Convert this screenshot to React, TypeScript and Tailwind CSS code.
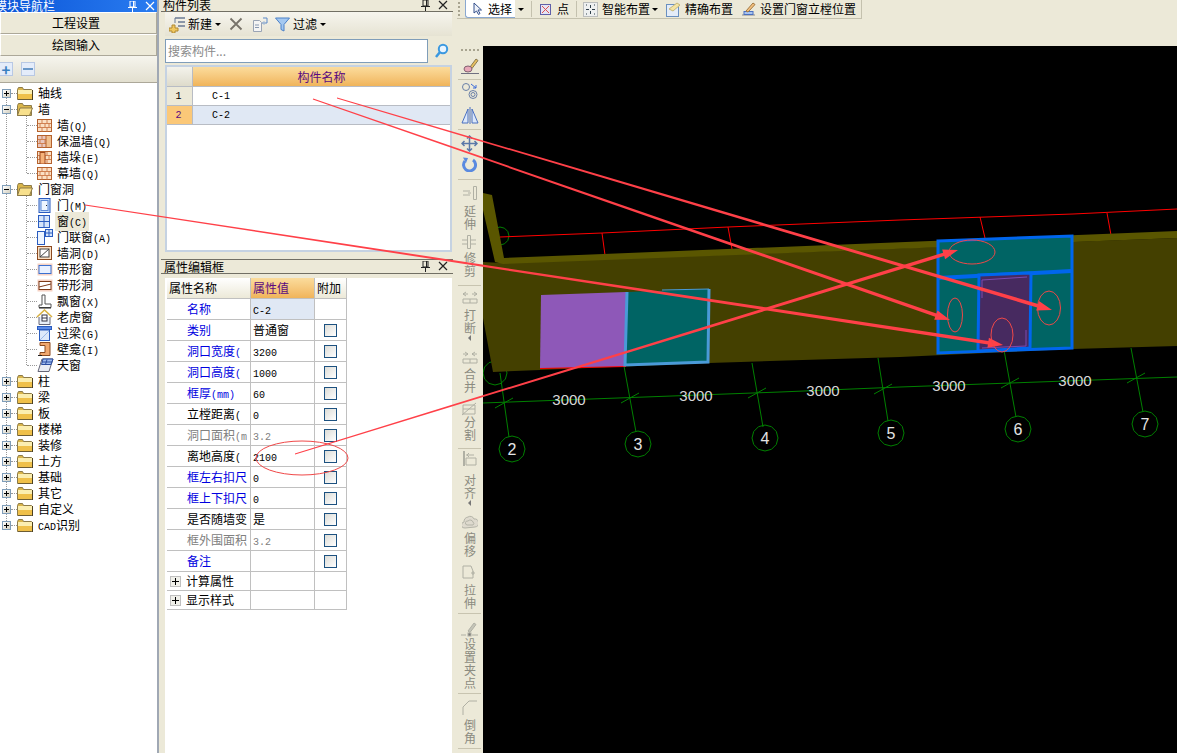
import React from "react";

const mono = "[font-family:'Liberation_Mono',monospace] text-[10px]";

// latin runs are drawn narrower, like the half width glyphs of the old ui font
function Txt({ children }: { children: string }) {
  const parts = children.split(/([\x00-\x7f]+)/).filter(Boolean);
  return (
    <>
      {parts.map((p, i) =>
        /^[\x00-\x7f]+$/.test(p) ? (
          <span key={i} className={mono}>
            {p}
          </span>
        ) : (
          <span key={i}>{p}</span>
        )
      )}
    </>
  );
}

function Pin({ light }: { light?: boolean }) {
  const c = light ? "#fff" : "#222";
  return (
    <svg width="9" height="11" viewBox="0 0 9 11">
      <path d="M2 0h5v6H2zM0 6.500h9M4.500 7v4M5.500 0v6" stroke={c} fill="none" />
    </svg>
  );
}

function Close({ light }: { light?: boolean }) {
  return (
    <svg width="10" height="10" viewBox="0 0 10 10">
      <path d="M1 1l8 8M9 1l-8 8" stroke={light ? "#fff" : "#222"} strokeWidth="1.2" />
    </svg>
  );
}

function Folder({ open }: { open?: boolean }) {
  return (
    <svg width="16" height="13" viewBox="0 0 16 13" className="shrink-0">
      <path d="M.5 2.500l1-2h4l1 2h8v10H.5z" fill="#d9b54a" stroke="#8d7b49" />
      {open ? (
        <path d="M3 5h12.500l-3 7.500H.5z" fill="#f8e08c" stroke="#8d7b49" />
      ) : (
        <>
          <path d="M1 3h14v4H1z" fill="#fbeeb0" />
          <path d="M1 7h14v5H1z" fill="#efc04a" />
          <path d="M15.500 3v10H1" stroke="#4c4020" fill="none" />
        </>
      )}
    </svg>
  );
}

function Brick({ kind }: { kind?: string }) {
  return (
    <svg width="15" height="13" viewBox="0 0 15 13" className="shrink-0">
      <rect x=".5" y=".5" width="14" height="12" fill={kind === "mesh" ? "#e8c8c0" : "#fbe0c4"} stroke="#b5622e" />
      <path d="M1 4.500h13M1 8.500h13M5 1v3.500M10 1v3.500M3 4.500v4M8 4.500v4M12 4.500v4M5 8.500v4M10 8.500v4" stroke="#d08050" fill="none" />
      {kind === "mesh" && <rect x="9" y=".5" width="5.500" height="12" fill="#f0c090" stroke="#b5622e" />}
      {kind === "pier" && <rect x="3" y="1.500" width="5" height="11.500" fill="#f5b27a" stroke="#a04a20" />}
    </svg>
  );
}

function LeafIcon({ name }: { name: string }) {
  switch (name) {
    case "door":
      return (
        <svg width="15" height="15" viewBox="0 0 15 15" className="shrink-0">
          <rect x="2" y=".5" width="11" height="14" fill="#c5dbf7" stroke="#2a5cc0" />
          <rect x="4" y="2.500" width="7" height="10" fill="#eef5ff" stroke="#5a88d8" />
          <rect x="9" y="7" width="1" height="1" fill="#222" />
        </svg>
      );
    case "window":
      return (
        <svg width="15" height="13" viewBox="0 0 15 13" className="shrink-0">
          <rect x="1.500" y=".5" width="11" height="12" fill="#d4e4fa" stroke="#2a5cc0" />
          <path d="M7 1v11M2 6.500h10" stroke="#2a5cc0" />
        </svg>
      );
    case "combo":
      return (
        <svg width="17" height="16" viewBox="0 0 17 16" className="-ml-[1px] shrink-0">
          <rect x="1.500" y="2.500" width="7" height="13" fill="#eef5ff" stroke="#2a5cc0" />
          <rect x="9.500" y=".5" width="7" height="7" fill="#d4e4fa" stroke="#2a5cc0" />
          <path d="M13 1v6M10 4h6" stroke="#2a5cc0" />
        </svg>
      );
    case "hole":
      return (
        <svg width="15" height="14" viewBox="0 0 15 14" className="shrink-0">
          <rect x=".5" y=".5" width="14" height="13" fill="#fbe0c4" stroke="#8c4a20" />
          <rect x="3" y="3" width="9" height="8" fill="#fff" stroke="#444" />
          <path d="M3 11l9-8" stroke="#444" />
        </svg>
      );
    case "strip":
      return (
        <svg width="16" height="13" viewBox="0 0 16 13" className="shrink-0">
          <rect x=".5" y=".5" width="15" height="12" fill="#f6d2c4" />
          <rect x="2" y="2.500" width="12" height="8" fill="#e8f0ff" stroke="#3a70d0" />
        </svg>
      );
    case "striphole":
      return (
        <svg width="16" height="13" viewBox="0 0 16 13" className="shrink-0">
          <rect x=".5" y=".5" width="15" height="12" fill="#f6d2c4" />
          <rect x="2" y="2.500" width="12" height="8" fill="#fff" stroke="#7c3a18" />
          <path d="M2 8l12-3" stroke="#7c3a18" />
        </svg>
      );
    case "bay":
      return (
        <svg width="15" height="15" viewBox="0 0 15 15" className="shrink-0">
          <path d="M5 1h3v9h6v3.500H2V11h3z" fill="#fff" stroke="#555" />
          <path d="M2 14h12" stroke="#222" />
        </svg>
      );
    case "dormer":
      return (
        <svg width="17" height="16" viewBox="0 0 17 16" className="-ml-[1px] shrink-0">
          <path d="M1 8l7.500-7L16 8" fill="none" stroke="#d8b040" strokeWidth="1.500" />
          <path d="M3 8v7.500h11V8" fill="#e8eef8" stroke="#667" />
          <rect x="6" y="6" width="5" height="6" fill="#fff" stroke="#334" />
          <path d="M6 9h5" stroke="#334" />
        </svg>
      );
    case "lintel":
      return (
        <svg width="15" height="15" viewBox="0 0 15 15" className="shrink-0">
          <rect x=".5" y=".5" width="14" height="3" fill="#5a8ae8" stroke="#2a5cc0" />
          <rect x="2.500" y="4" width="10" height="10.500" fill="#dce8fa" stroke="#2a5cc0" />
          <path d="M3 14l9-9" stroke="#9ab8e8" />
        </svg>
      );
    case "niche":
      return (
        <svg width="15" height="14" viewBox="0 0 15 14" className="shrink-0">
          <path d="M3 .5h10v13H3v-3h5v-7H3z" fill="#f0a870" stroke="#8c4a20" />
          <path d="M1 13.500h4" stroke="#222" />
        </svg>
      );
    default:
      return (
        <svg width="17" height="14" viewBox="0 0 17 14" className="shrink-0">
          <path d="M5 1h11l-4 12.500H1z" fill="#e8ecf4" stroke="#667" />
          <path d="M4.500 6.500L6 1h10l-2 5.500zM10 1.500L8.500 6.500M5 4h10" fill="#9fbcf0" stroke="#2a4ca0" />
        </svg>
      );
  }
}

function Expander({ open }: { open?: boolean }) {
  return (
    <span className="relative flex h-[9px] w-[9px] shrink-0 items-center justify-center border border-[#7f9db9] bg-gradient-to-br from-white to-[#d4d0c0]">
      <span className="absolute h-px w-[5px] bg-black" />
      {!open && <span className="absolute h-[5px] w-px bg-black" />}
    </span>
  );
}

type Node = { label: string; open?: boolean; leaf?: string; mesh?: string };

const tree: Node[] = [
  { label: "轴线" },
  { label: "墙", open: true },
  { label: "墙(Q)", leaf: "brick" },
  { label: "保温墙(Q)", leaf: "brick", mesh: "mesh" },
  { label: "墙垛(E)", leaf: "brick", mesh: "pier" },
  { label: "幕墙(Q)", leaf: "brick" },
  { label: "门窗洞", open: true },
  { label: "门(M)", leaf: "door" },
  { label: "窗(C)", leaf: "window" },
  { label: "门联窗(A)", leaf: "combo" },
  { label: "墙洞(D)", leaf: "hole" },
  { label: "带形窗", leaf: "strip" },
  { label: "带形洞", leaf: "striphole" },
  { label: "飘窗(X)", leaf: "bay" },
  { label: "老虎窗", leaf: "dormer" },
  { label: "过梁(G)", leaf: "lintel" },
  { label: "壁龛(I)", leaf: "niche" },
  { label: "天窗", leaf: "sky" },
  { label: "柱" },
  { label: "梁" },
  { label: "板" },
  { label: "楼梯" },
  { label: "装修" },
  { label: "土方" },
  { label: "基础" },
  { label: "其它" },
  { label: "自定义" },
  { label: "CAD识别" },
];

function TreeRow({ node }: { node: Node }) {
  if (node.leaf) {
    return (
      <div className="flex h-4 items-center">
        <span className="ml-[27px] w-[10px] shrink-0 border-t border-dotted border-[#999]" />
        <span className="flex w-[20px] shrink-0 justify-start">
          {node.leaf === "brick" ? <Brick kind={node.mesh} /> : <LeafIcon name={node.leaf} />}
        </span>
        <span className={node.label === "窗(C)" ? "-ml-[2px] bg-[#ece9d8] px-[2px]" : ""}>
          <Txt>{node.label}</Txt>
        </span>
      </div>
    );
  }
  return (
    <div className="flex h-4 items-center">
      <span className="ml-[2px]">
        <Expander open={node.open} />
      </span>
      <span className="w-[6px] shrink-0 border-t border-dotted border-[#999]" />
      <Folder open={node.open} />
      <span className="ml-[5px]">
        <Txt>{node.label}</Txt>
      </span>
    </div>
  );
}

function NavButton({ label }: { label: string }) {
  return (
    <div className="flex h-[22px] items-center justify-center border border-[#aca899] border-t-white border-l-white bg-[#ece9d8] pr-[5px] text-[12px]">
      {label}
    </div>
  );
}

function LeftPanel() {
  return (
    <div className="flex h-full w-[159px] shrink-0 flex-col border-r-2 border-[#a0a8b4]">
      <div className="flex h-[12px] items-end overflow-hidden bg-gradient-to-r from-[#0a55d8] to-[#2a7cf0] text-white">
        <span className="-ml-[5px] flex-1 leading-[13px] whitespace-nowrap">模块导航栏</span>
        <span className="mr-[2px] flex gap-[8px]">
          <Pin light />
          <Close light />
        </span>
      </div>
      <NavButton label="工程设置" />
      <NavButton label="绘图输入" />
      <div className="flex h-[27px] items-center gap-[8px] border-b border-[#aca899] bg-gradient-to-b from-[#f6f5ee] to-[#e2dfcf]">
        <span className="-ml-px flex h-[14px] w-[14px] items-center justify-center border border-[#b8c8e4] bg-[#e4ecfa] text-[15px] leading-none font-bold text-[#3a80c0]">
          +
        </span>
        <span className="flex h-[14px] w-[14px] items-center justify-center border border-[#b8c8e4] bg-[#e4ecfa]">
          <span className="h-[2px] w-[10px] bg-[#6a98c8]" />
        </span>
      </div>
      <div className="relative flex-1 bg-white pt-[2px] text-[12px] text-black">
        <span className="absolute top-[10px] left-[6px] h-[432px] border-l border-dotted border-[#999]" />
        <span className="absolute top-[26px] left-[26px] h-[64px] border-l border-dotted border-[#999]" />
        <span className="absolute top-[106px] left-[26px] h-[176px] border-l border-dotted border-[#999]" />
        <div className="relative">
          {tree.map((n) => (
            <TreeRow key={n.label} node={n} />
          ))}
        </div>
      </div>
    </div>
  );
}

function ComponentList() {
  return (
    <div className="flex h-[252px] shrink-0 flex-col">
      <div className="flex h-[12px] items-end overflow-hidden border-b border-[#716f64] bg-[#ece9d8]">
        <span className="ml-[2px] flex-1 leading-[12px] whitespace-nowrap">构件列表</span>
        <span className="mr-[5px] flex gap-[8px]">
          <Pin />
          <Close />
        </span>
      </div>
      <div className="mr-[1px] ml-[4px] flex h-[24px] items-center bg-gradient-to-b from-[#f6f5ee] to-[#e6e3d3] pl-[4px]">
        <svg width="17" height="17" viewBox="0 0 17 17">
          <path d="M6 2h10M9 6h7M9 10h7" stroke="#6a7a94" strokeWidth="1.500" />
          <path d="M6 2v5" stroke="#6a7a94" />
          <path d="M3 9h3v3h3v3H6v2H3v-2H0v-3h3z" fill="#f0c860" stroke="#b08830" />
        </svg>
        <span className="ml-[2px]">新建</span>
        <span className="ml-[3px] h-0 w-0 border-x-[3px] border-t-[3px] border-x-transparent border-t-black" />
        <svg width="14" height="14" viewBox="0 0 14 14" className="ml-[8px]">
          <path d="M1.500 1.500l11 11M12.500 1.500l-11 11" stroke="#77736a" strokeWidth="1.800" />
        </svg>
        <svg width="17" height="15" viewBox="0 0 17 15" className="ml-[9px]">
          <path d="M1.500 3.500h6l2 2v9h-8z" fill="#f4f4f4" stroke="#9aa4b4" />
          <path d="M3 8h4M3 10.500h4" stroke="#8898b0" />
          <path d="M11 1h4v5h-3M12 4.500L10.500 6l1.500 1.500" stroke="#5a88c8" fill="none" />
        </svg>
        <svg width="15" height="15" viewBox="0 0 15 15" className="ml-[6px]">
          <path d="M.5 1h14L9 7.500V14l-3-1.500v-5z" fill="#a4c8f0" stroke="#4a80c8" />
        </svg>
        <span className="ml-[3px]">过滤</span>
        <span className="ml-[3px] h-0 w-0 border-x-[3px] border-t-[3px] border-x-transparent border-t-black" />
      </div>
      <div className="mt-[2px] mr-[1px] ml-[4px] flex h-[25px] items-center">
        <div className="flex h-[24px] w-[263px] items-center border border-[#7f9db9] bg-white pl-[2px] text-[#8a8a8a]">
          搜索构件...
        </div>
        <div className="ml-[2px] flex h-[24px] flex-1 items-center justify-center">
          <svg width="15" height="16" viewBox="0 0 15 16">
            <circle cx="9" cy="6" r="4.200" fill="#e8f4ff" stroke="#3a98e0" strokeWidth="2" />
            <path d="M6 9l-4 5" stroke="#3a98e0" strokeWidth="2.500" />
          </svg>
        </div>
      </div>
      <div className="mt-[2px] mr-[1px] ml-[4px] flex-1 border-2 border-[#c5d2e2] bg-white">
        <div className="flex h-[20px] border-b border-[#b8bcc4]">
          <span className="w-[26px] border-r border-[#b8bcc4] bg-gradient-to-b from-[#f4f3ec] to-[#dedbcb]" />
          <span className="flex flex-1 items-center justify-center bg-gradient-to-b from-[#fbdc9c] to-[#f0b45a] text-[#5a0a80]">
            构件名称
          </span>
        </div>
        <div className="flex h-[19px] border-b border-[#b8bcc4]">
          <span className={"flex w-[26px] items-center justify-center border-r border-[#b8bcc4] bg-[#ece9d8] pr-[2px] text-black " + mono}>
            1
          </span>
          <span className="flex flex-1 items-center pl-[19px]">
            <Txt>C-1</Txt>
          </span>
        </div>
        <div className="flex h-[19px] border-b border-[#b8bcc4] bg-[#e0e8f4]">
          <span className={"flex w-[26px] items-center justify-center border-r border-[#b8bcc4] bg-[#fbc878] pr-[2px] text-[#5a0a80] " + mono}>
            2
          </span>
          <span className="flex flex-1 items-center pl-[19px]">
            <Txt>C-2</Txt>
          </span>
        </div>
      </div>
    </div>
  );
}

type Prop = { name: string; value: string; tone: "blue" | "black" | "gray"; check?: boolean; sel?: boolean };

// names stay as short as the narrow column shows them
const props: Prop[] = [
  { name: "名称", value: "C-2", tone: "blue", sel: true },
  { name: "类别", value: "普通窗", tone: "blue", check: true },
  { name: "洞口宽度(", value: "3200", tone: "blue", check: true },
  { name: "洞口高度(", value: "1000", tone: "blue", check: true },
  { name: "框厚(mm)", value: "60", tone: "blue", check: true },
  { name: "立樘距离(", value: "0", tone: "black", check: true },
  { name: "洞口面积(m", value: "3.2", tone: "gray", check: true },
  { name: "离地高度(", value: "2100", tone: "black", check: true },
  { name: "框左右扣尺", value: "0", tone: "blue", check: true },
  { name: "框上下扣尺", value: "0", tone: "blue", check: true },
  { name: "是否随墙变", value: "是", tone: "black", check: true },
  { name: "框外围面积", value: "3.2", tone: "gray", check: true },
  { name: "备注", value: "", tone: "blue", check: true },
];

function Check() {
  return <span className="h-[13px] w-[13px] border border-[#1c5180] bg-gradient-to-br from-[#dcdcd7] to-white" />;
}

function PropRow({ p }: { p: Prop }) {
  const tone = p.tone === "blue" ? "text-[#0000e0]" : p.tone === "gray" ? "text-[#808080]" : "text-black";
  return (
    <div className="flex h-[21px] border-b border-[#c0c0c0]">
      <span className={"w-[84px] overflow-hidden border-r border-[#c0c0c0] pl-[20px] leading-[20px] whitespace-nowrap " + tone}>
        <Txt>{p.name}</Txt>
      </span>
      <span className={"w-[64px] overflow-hidden border-r border-[#c0c0c0] pl-[2px] leading-[20px] whitespace-nowrap " + (p.sel ? "bg-[#e0e8f4] " : "") + (p.tone === "gray" ? "text-[#808080]" : "text-black")}>
        <Txt>{p.value}</Txt>
      </span>
      <span className="flex w-[31px] items-center justify-center">{p.check && <Check />}</span>
    </div>
  );
}

function GroupRow({ label }: { label: string }) {
  return (
    <div className="flex h-[19px] border-b border-[#c0c0c0]">
      <span className="flex w-[84px] items-center border-r border-[#c0c0c0] pl-[3px]">
        <span className="relative mr-[5px] flex h-[11px] w-[11px] items-center justify-center border border-[#c0c0c0] bg-[#f0f0ea]">
          <span className="absolute h-px w-[7px] bg-black" />
          <span className="absolute h-[7px] w-px bg-black" />
        </span>
        {label}
      </span>
      <span className="w-[64px] border-r border-[#c0c0c0]" />
      <span className="w-[31px]" />
    </div>
  );
}

function PropertyEditor() {
  return (
    <div className="flex min-h-0 flex-1 flex-col pt-[7px]">
      <div className="flex h-[15px] items-center border-y border-[#716f64] bg-[#ece9d8] pl-[3px]">
        <span className="flex-1">属性编辑框</span>
        <span className="mr-[5px] flex gap-[8px]">
          <Pin />
          <Close />
        </span>
      </div>
      <div className="mt-[4px] mr-[1px] ml-[4px] flex-1 bg-white pl-[2px]">
        <div className="w-[180px] border-r border-[#c0c0c0]">
          <div className="flex h-[21px] border-b border-[#c0c0c0]">
            <span className="flex w-[84px] items-center border-r border-[#c0c0c0] bg-gradient-to-b from-white to-[#ece9d8] pl-[2px]">属性名称</span>
            <span className="flex w-[64px] items-center border-r border-[#c0c0c0] bg-gradient-to-b from-[#fbdc9c] to-[#f0b45a] pl-[2px] text-[#5a0a80]">属性值</span>
            <span className="flex w-[31px] items-center bg-gradient-to-b from-white to-[#ece9d8] pl-[2px]">附加</span>
          </div>
          {props.map((p) => (
            <PropRow key={p.name} p={p} />
          ))}
          <GroupRow label="计算属性" />
          <GroupRow label="显示样式" />
        </div>
      </div>
    </div>
  );
}

function TopToolbar() {
  return (
    <div className="flex h-[19px] w-[405px] items-center border-r border-b border-[#c4c1ae] text-[12px]">
      <span className="ml-[1px] flex h-[14px] w-[3px] shrink-0 flex-col justify-between">
        <span className="h-[2px] w-[2px] bg-[#a8a490]" />
        <span className="h-[2px] w-[2px] bg-[#a8a490]" />
        <span className="h-[2px] w-[2px] bg-[#a8a490]" />
        <span className="h-[2px] w-[2px] bg-[#a8a490]" />
      </span>
      <span className="ml-[4px] flex h-[18px] w-[50px] items-center rounded-bl-[3px] border-b border-l border-[#8aa8d0] bg-white pl-[7px]">
        <svg width="10" height="13" viewBox="0 0 10 13">
          <path d="M1 1v10l2.500-2 2 3.500 1.500-1L5 8h3.500z" fill="#eef2fa" stroke="#34508c" />
        </svg>
        <span className="ml-[5px]">选择</span>
      </span>
      <span className="ml-[3px] h-0 w-0 border-x-[3px] border-t-[3px] border-x-transparent border-t-black" />
      <span className="ml-[7px] h-[16px] w-px bg-[#c4c1ae]" />
      <svg width="11" height="11" viewBox="0 0 11 11" className="ml-[8px]">
        <rect x=".5" y=".5" width="10" height="10" fill="#e4e4f4" stroke="#6060a8" />
        <path d="M2 2l7 7M9 2l-7 7" stroke="#e05050" />
      </svg>
      <span className="ml-[6px]">点</span>
      <span className="ml-[7px] h-[16px] w-px bg-[#c4c1ae]" />
      <svg width="15" height="15" viewBox="0 0 15 15" className="ml-[6px]">
        <rect x=".5" y=".5" width="14" height="14" fill="#eef0f0" stroke="#8a9098" strokeDasharray="1 1" />
        <path d="M7.500 3v3M7.500 9v3M3 7.500h3M9 7.500h3M3 3h1M11 3h1M3 12h1M11 12h1" stroke="#30404c" />
      </svg>
      <span className="ml-[4px]">智能布置</span>
      <span className="ml-[2px] h-0 w-0 border-x-[3px] border-t-[3px] border-x-transparent border-t-black" />
      <svg width="15" height="15" viewBox="0 0 15 15" className="ml-[8px]">
        <rect x=".5" y="2.500" width="12" height="12" fill="#e4ecf8" stroke="#6a90c0" />
        <path d="M3 7l8-6 3 2-7 6z" fill="#f4e4a4" stroke="#c8b878" />
      </svg>
      <span className="ml-[4px]">精确布置</span>
      <svg width="15" height="14" viewBox="0 0 15 14" className="ml-[8px]">
        <path d="M1 13h13" stroke="#8a8a8a" />
        <rect x="3" y="9.500" width="9" height="3" fill="#a8c4f0" stroke="#4a70c0" />
        <path d="M5 9l7-8 2 1.500-7 7.500z" fill="#f4c080" stroke="#a07840" />
      </svg>
      <span className="ml-[4px] whitespace-nowrap">设置门窗立樘位置</span>
    </div>
  );
}

function VSep({ className }: { className?: string }) {
  return <div className={"mx-[1px] h-px shrink-0 bg-[#c8c4b0] " + (className ?? "")} />;
}

function VIcon({ className, children }: { className: string; children: React.ReactNode }) {
  return <div className={"flex shrink-0 items-center justify-center " + className}>{children}</div>;
}

function VLabel({ text, className }: { text: string; className: string }) {
  return (
    <div className={"flex shrink-0 justify-center " + className}>
      <span className="text-[12px] leading-none tracking-[1px] text-[#8b8b80] [writing-mode:vertical-rl]">{text}</span>
    </div>
  );
}

function VArrow() {
  return (
    <div className="flex h-[6px] shrink-0 items-center justify-center">
      <span className="h-0 w-0 border-y-[3px] border-r-[3px] border-y-transparent border-r-[#777]" />
    </div>
  );
}

const gr = "#b0b0a4";

function SideToolbar() {
  return (
    <div className="flex h-full w-[26px] shrink-0 flex-col overflow-hidden bg-[#ece9d8] pr-[1px]">
      <div className="flex h-[7px] shrink-0 items-center justify-center gap-[2px]">
        <span className="h-[2px] w-[2px] bg-[#a8a490]" />
        <span className="h-[2px] w-[2px] bg-[#a8a490]" />
        <span className="h-[2px] w-[2px] bg-[#a8a490]" />
        <span className="h-[2px] w-[2px] bg-[#a8a490]" />
        <span className="h-[2px] w-[2px] bg-[#a8a490]" />
      </div>
      <VIcon className="h-[26px]">
        <svg width="18" height="18" viewBox="0 0 18 18">
          <path d="M9 10l6-8 2 1.500-6 8z" fill="#e8c060" stroke="#8a7a50" />
          <ellipse cx="7" cy="12" rx="4" ry="3" fill="#e8a8b8" stroke="#806070" />
          <path d="M0 16.500h18" stroke="#707080" />
        </svg>
      </VIcon>
      <VSep />
      <VIcon className="h-[22px]">
        <svg width="18" height="18" viewBox="0 0 18 18" fill="none" stroke="#6a80a8">
          <circle cx="5" cy="5" r="3.500" />
          <circle cx="12" cy="12.500" r="4" />
          <circle cx="12" cy="12.500" r="2" />
          <path d="M10 2l5 4M15 3v3h-3" stroke="#3a6ad8" />
        </svg>
      </VIcon>
      <VIcon className="h-[27px]">
        <svg width="18" height="17" viewBox="0 0 18 17" fill="#dce8fa" stroke="#4a70c0">
          <path d="M7 2v14H1zM11 2v14h6z" />
          <path d="M9 0v17" />
        </svg>
      </VIcon>
      <VSep />
      <VIcon className="h-[26px]">
        <svg width="17" height="17" viewBox="0 0 17 17" stroke="#5a78a8" fill="none" strokeWidth="1.500">
          <path d="M8.500 1v15M1 8.500h15M6 3.500L8.500 1 11 3.500M6 13.500L8.500 16 11 13.500M3.500 6L1 8.500 3.500 11M13.500 6L16 8.500 13.500 11" />
        </svg>
      </VIcon>
      <VIcon className="mb-[7px] h-[16px]">
        <svg width="15" height="15" viewBox="0 0 15 15" fill="none">
          <path d="M3 4a6 6 0 1 0 8-1" stroke="#5a8ae0" strokeWidth="3" />
          <path d="M1 .5l5 .5-2 5z" fill="#5a8ae0" />
        </svg>
      </VIcon>
      <VSep />
      <VIcon className="h-[25px]">
        <svg width="15" height="14" viewBox="0 0 15 14" stroke={gr} fill="none">
          <path d="M11.500 .5h3v13h-3zM1 5h7M1 9h7M6 7h3" />
        </svg>
      </VIcon>
      <VLabel text="延伸" className="h-[26px]" />
      <VIcon className="h-[21px]">
        <svg width="15" height="14" viewBox="0 0 15 14" stroke={gr} fill="none">
          <path d="M5.500 .5h3v13h-3zM0 5h5M0 9h5M9 5h5M9 9h5" />
        </svg>
      </VIcon>
      <VLabel text="修剪" className="h-[26px]" />
      <VSep className="mt-[7px]" />
      <VIcon className="h-[23px]">
        <svg width="16" height="13" viewBox="0 0 16 13" stroke={gr} fill="none">
          <path d="M1 3h5M4 1L1 3l3 2M15 3h-5M12 1l3 2-3 2M1 8h14v4H1zM8 8v4" />
        </svg>
      </VIcon>
      <VLabel text="打断" className="h-[26px]" />
      <VArrow />
      <VIcon className="mt-[5px] h-[22px]">
        <svg width="16" height="13" viewBox="0 0 16 13" stroke={gr} fill="none">
          <path d="M1 3h5M3 1l3 2-3 2M15 3h-5M13 1l-3 2 3 2M1 8h14v4H1zM8 8v4" />
        </svg>
      </VIcon>
      <VLabel text="合并" className="h-[26px]" />
      <VIcon className="mt-[6px] h-[16px]">
        <svg width="17" height="15" viewBox="0 0 17 15" stroke={gr} fill="none">
          <path d="M2 4h12v9H2zM2 8h12M1 14L15 2" />
        </svg>
      </VIcon>
      <VLabel text="分割" className="h-[26px]" />
      <VSep className="mt-[6px]" />
      <VIcon className="h-[18px]">
        <svg width="15" height="15" viewBox="0 0 15 15" stroke={gr} fill="none">
          <path d="M2 0v15" strokeWidth="2" />
          <path d="M4 7h10v7H4zM4 4h8M7 2L5 4l2 2" />
        </svg>
      </VIcon>
      <VLabel text="对齐" className="mt-[7px] h-[26px]" />
      <VArrow />
      <VIcon className="mt-[8px] h-[16px]">
        <svg width="16" height="15" viewBox="0 0 16 15" stroke="#b4b4a8" fill="#dedace">
          <path d="M3 13a3 3 0 0 1-1-6 5 5 0 0 1 4-5 4 4 0 0 1 6 2 4 4 0 0 1 1 8z" />
          <path d="M5 10a2 2 0 0 1 1-4 3 3 0 0 1 5 1 2 2 0 0 1 0 3z" fill="none" />
        </svg>
      </VIcon>
      <VLabel text="偏移" className="mt-[2px] h-[26px]" />
      <VIcon className="mt-[6px] h-[16px]">
        <svg width="15" height="15" viewBox="0 0 15 15" stroke={gr} fill="none">
          <path d="M1 1h8l2 5v7H1z" />
          <path d="M9 8h4M11 6v4" />
        </svg>
      </VIcon>
      <VLabel text="拉伸" className="mt-[4px] h-[26px]" />
      <VSep className="mt-[3px]" />
      <VIcon className="mt-[8px] h-[16px]">
        <svg width="18" height="16" viewBox="0 0 18 16" fill="none" stroke={gr}>
          <path d="M7 9l6-8 2 1.500-6 8z" fill="#c4c4b8" />
          <path d="M0 13h5M11 13h6" />
          <rect x="7" y="11" width="3" height="3" fill="#777" />
        </svg>
      </VIcon>
      <VLabel text="设置夹点" className="h-[52px]" />
      <VSep className="mt-[3px]" />
      <VIcon className="mt-[5px] h-[16px]">
        <svg width="15" height="15" viewBox="0 0 15 15" fill="none" stroke={gr}>
          <path d="M1 15V7l6-6h8" />
        </svg>
      </VIcon>
      <VLabel text="倒角" className="mt-[4px] h-[26px]" />
      <VSep className="mt-[3px]" />
    </div>
  );
}

// a 12 sided ring, the way the cad view draws its axis bubbles
function ring(cx: number, cy: number, r: number) {
  return Array.from({ length: 12 }, (_, i) => {
    const a = (i * Math.PI) / 6;
    return `${(cx + r * Math.cos(a)).toFixed(1)},${(cy + r * Math.sin(a)).toFixed(1)}`;
  }).join(" ");
}

const axes = [
  { n: "2", top: [500, 373], end: [509, 437], c: [512, 449], mid: [504, 403] },
  { n: "3", top: [624, 366], end: [636, 432], c: [638, 444], mid: [630, 398] },
  { n: "4", top: [752, 363], end: [763, 427], c: [765, 438], mid: [757, 393] },
  { n: "5", top: [878, 358], end: [888, 421], c: [891, 433], mid: [883, 389] },
  { n: "6", top: [1004, 350], end: [1016, 417], c: [1018, 429], mid: [1010, 383] },
  { n: "7", top: [1131, 348], end: [1143, 412], c: [1145, 424], mid: [1136, 378] },
];

const dims = [
  [569, 405],
  [696, 401],
  [823, 396],
  [949, 391],
  [1075, 386],
];

function Canvas() {
  return (
    <div className="h-full flex-1 bg-black">
      <svg width="694" height="707" viewBox="483 46 694 707" className="block">
        <polygon points={ring(500, 236, 9)} fill="none" stroke="#008000" />
        <polygon points={ring(495, 373, 12)} fill="none" stroke="#008000" />
        <polyline points="500,237 602,233 728,227 900,220 1073,214 1177,209" fill="none" stroke="#ff0000" />
        <path d="M602 233l3 22M728 227l4 22M980 217l5 21M1107 213l4 22" stroke="#ff0000" fill="none" />
        <polyline points="483,403 780,392 900,387 1177,377" fill="none" stroke="#008000" />
        {axes.map((a) => (
          <g key={a.n}>
            <line x1={a.top[0]} y1={a.top[1]} x2={a.end[0]} y2={a.end[1]} stroke="#008000" />
            <line x1={a.mid[0] - 9} y1={a.mid[1] + 5} x2={a.mid[0] + 9} y2={a.mid[1] - 5} stroke="#008000" />
            <polygon points={ring(a.c[0], a.c[1], 13)} fill="none" stroke="#008000" />
            <text x={a.c[0]} y={a.c[1] + 6} textAnchor="middle" fontSize="16" fill="#e4e4e4" fontFamily="Liberation Sans, sans-serif">
              {a.n}
            </text>
          </g>
        ))}
        {dims.map((d) => (
          <text key={d[0]} x={d[0]} y={d[1]} textAnchor="middle" fontSize="15" fill="#d8d8d8" fontFamily="Liberation Sans, sans-serif">
            3000
          </text>
        ))}
        <polygon points="483,262 503,263 1177,238 1177,346 1072,349 900,357 709,363 540,370 493,372 483,318" fill="#444000" />
        <polygon points="483,193 492,195 504,258 1177,231 1177,238 503,264 495,262 483,210" fill="#5a5600" />
        <polyline points="540,368 626,366" stroke="#ff0000" fill="none" strokeWidth="2" />
        <polygon points="541,295 626,292 626,366 540,368" fill="#8e58b8" />
        <polygon points="627,292 709,289 708,362 625,365" fill="#006464" />
        <polyline points="627,292 625,365 708,362 709,289" fill="none" stroke="#4a9ad8" strokeWidth="3" />
        <polyline points="662,290 709,289" fill="none" stroke="#4a9ad8" />
        <polygon points="938,241 1072,236 1072,348 938,353" fill="#006464" stroke="#0066ee" strokeWidth="3" />
        <polyline points="938,278 1072,271" stroke="#0066ee" strokeWidth="4" fill="none" />
        <polygon points="979,275 1031,273 1030,348 978,351" fill="#472a60" stroke="#0066ee" strokeWidth="3" />
        <polyline points="982,298 982,280 1027,277" fill="none" stroke="#7c4ab0" />
        <polyline points="982,348 1026,346 1026,330" fill="none" stroke="#7c4ab0" />
      </svg>
    </div>
  );
}

function arrow(x1: number, y1: number, x2: number, y2: number) {
  const len = Math.hypot(x2 - x1, y2 - y1);
  const ux = (x2 - x1) / len;
  const uy = (y2 - y1) / len;
  const nx = -uy;
  const ny = ux;
  const bx = x2 - ux * 15;
  const by = y2 - uy * 15;
  const p = (x: number, y: number) => `${x.toFixed(1)},${y.toFixed(1)}`;
  return [
    p(x1 + nx * 0.5, y1 + ny * 0.5),
    p(bx + nx * 1.8, by + ny * 1.8),
    p(bx + nx * 5, by + ny * 5),
    p(x2, y2),
    p(bx - nx * 5, by - ny * 5),
    p(bx - nx * 1.8, by - ny * 1.8),
    p(x1 - nx * 0.5, y1 - ny * 0.5),
  ].join(" ");
}

function Annotations() {
  return (
    <svg width="1177" height="753" viewBox="0 0 1177 753" className="pointer-events-none absolute inset-0">
      <polygon points={arrow(85, 205, 1003, 345)} fill="#ff4048" />
      <polygon points={arrow(337, 98, 1052, 310)} fill="#ff4048" />
      <polygon points={arrow(313, 99, 950, 320)} fill="#ff4048" />
      <polygon points={arrow(295, 454, 958, 250)} fill="#ff4048" />
      <g fill="none" stroke="#f04848">
        <ellipse cx="302" cy="458" rx="46" ry="17" />
        <ellipse cx="972" cy="252" rx="23" ry="12" />
        <ellipse cx="955" cy="315" rx="7.500" ry="17" />
        <ellipse cx="1002" cy="335" rx="11" ry="17" />
        <ellipse cx="1049" cy="308" rx="11.500" ry="17" />
      </g>
    </svg>
  );
}

export default function App() {
  return (
    <div className="relative flex h-[753px] w-[1177px] overflow-hidden bg-[#ece9d8] [font-family:'Noto_Sans_CJK_SC',sans-serif] text-[12px] text-black">
      <LeftPanel />
      <div className="ml-[2px] flex h-full w-[292px] shrink-0 flex-col">
        <ComponentList />
        <PropertyEditor />
      </div>
      <div className="ml-[4px] flex h-full flex-1 flex-col">
        <div className="h-[46px] shrink-0">
          <TopToolbar />
        </div>
        <div className="flex min-h-0 flex-1">
          <SideToolbar />
          <Canvas />
        </div>
      </div>
      <Annotations />
    </div>
  );
}
